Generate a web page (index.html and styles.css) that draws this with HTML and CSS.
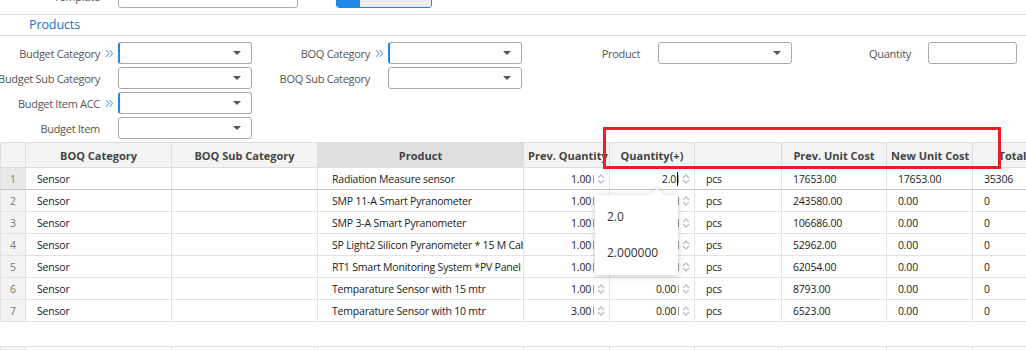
FILE: index.html
```html
<!DOCTYPE html>
<html lang="en">
<head>
    <meta charset="UTF-8">
    <title>Products</title>
    <link rel="stylesheet" href="styles.css">
</head>
<body>
    <!-- Template bar (scrolled, only bottom edge visible) -->
    <div class="top-strip">
        <div class="top-inner">
            <span class="tpl-label">Template</span>
            <span class="req-mark"></span>
            <div class="tpl-input"></div>
            <div class="load-btn"><span class="load-edge"></span><span class="load-text">Load</span></div>
        </div>
    </div>

    <div class="section-title">Products</div>

    <!-- Filters -->
    <div class="filters">
        <div class="fcol col1">
            <div class="field">
                <span class="flabel">Budget Category</span>
                <span class="req-mark"><svg viewBox="0 0 9 9"><path d="M1 1l3 3.5-3 3.5M4.5 1l3 3.5-3 3.5"/></svg></span>
                <div class="select required"><span class="caret"></span></div>
            </div>
            <div class="field">
                <span class="flabel">Budget Sub Category</span>
                <span class="req-mark"></span>
                <div class="select"><span class="caret"></span></div>
            </div>
            <div class="field">
                <span class="flabel">Budget Item ACC</span>
                <span class="req-mark"><svg viewBox="0 0 9 9"><path d="M1 1l3 3.5-3 3.5M4.5 1l3 3.5-3 3.5"/></svg></span>
                <div class="select required"><span class="caret"></span></div>
            </div>
            <div class="field">
                <span class="flabel">Budget Item</span>
                <span class="req-mark"></span>
                <div class="select"><span class="caret"></span></div>
            </div>
        </div>
        <div class="fcol col2">
            <div class="field">
                <span class="flabel">BOQ Category</span>
                <span class="req-mark"><svg viewBox="0 0 9 9"><path d="M1 1l3 3.5-3 3.5M4.5 1l3 3.5-3 3.5"/></svg></span>
                <div class="select required"><span class="caret"></span></div>
            </div>
            <div class="field">
                <span class="flabel">BOQ Sub Category</span>
                <span class="req-mark"></span>
                <div class="select"><span class="caret"></span></div>
            </div>
        </div>
        <div class="fcol col3">
            <div class="field">
                <span class="flabel">Product</span>
                <span class="req-mark"></span>
                <div class="select"><span class="caret"></span></div>
            </div>
        </div>
        <div class="fcol col4">
            <div class="field">
                <span class="flabel">Quantity</span>
                <span class="req-mark"></span>
                <div class="text-input"></div>
            </div>
        </div>
    </div>

    <!-- Grid -->
    <div class="grid-wrap">
        <table class="grid">
            <colgroup>
                <col style="width:25px"><col style="width:146px"><col style="width:146px"><col style="width:206px"><col style="width:86px"><col style="width:85px"><col style="width:87px"><col style="width:105px"><col style="width:86px"><col style="width:80px">
            </colgroup>
            <thead>
                <tr>
                    <th class="rownum"></th>
                    <th>BOQ Category</th>
                    <th>BOQ Sub Category</th>
                    <th class="sorted">Product</th>
                    <th>Prev. Quantity</th>
                    <th>Quantity(+)</th>
                    <th></th>
                    <th>Prev. Unit Cost</th>
                    <th>New Unit Cost</th>
                    <th>Total</th>
                </tr>
            </thead>
            <tbody>
                <tr class="current">
                    <td class="rownum">1</td>
                    <td>Sensor</td>
                    <td></td>
                    <td class="prod">Radiation Measure sensor</td>
                    <td class="spin"><div class="spin-box"><span class="num">1.00</span><span class="sep"></span><svg class="arrows" viewBox="0 0 10 12"><path d="M2 5l3-3 3 3M2 7l3 3 3-3"/></svg></div></td>
                    <td class="spin"><div class="spin-box"><span class="num editing">2.0<span class="text-cursor"></span></span><span class="sep"></span><svg class="arrows" viewBox="0 0 10 12"><path d="M2 5l3-3 3 3M2 7l3 3 3-3"/></svg></div></td>
                    <td>pcs</td>
                    <td>17653.00</td>
                    <td>17653.00</td>
                    <td>35306</td>
                </tr>
                <tr>
                    <td class="rownum">2</td>
                    <td>Sensor</td>
                    <td></td>
                    <td class="prod">SMP 11-A Smart Pyranometer</td>
                    <td class="spin"><div class="spin-box"><span class="num">1.00</span><span class="sep"></span><svg class="arrows" viewBox="0 0 10 12"><path d="M2 5l3-3 3 3M2 7l3 3 3-3"/></svg></div></td>
                    <td class="spin"><div class="spin-box"><span class="num">0.00</span><span class="sep"></span><svg class="arrows" viewBox="0 0 10 12"><path d="M2 5l3-3 3 3M2 7l3 3 3-3"/></svg></div></td>
                    <td>pcs</td>
                    <td>243580.00</td>
                    <td>0.00</td>
                    <td>0</td>
                </tr>
                <tr>
                    <td class="rownum">3</td>
                    <td>Sensor</td>
                    <td></td>
                    <td class="prod">SMP 3-A Smart Pyranometer</td>
                    <td class="spin"><div class="spin-box"><span class="num">1.00</span><span class="sep"></span><svg class="arrows" viewBox="0 0 10 12"><path d="M2 5l3-3 3 3M2 7l3 3 3-3"/></svg></div></td>
                    <td class="spin"><div class="spin-box"><span class="num">0.00</span><span class="sep"></span><svg class="arrows" viewBox="0 0 10 12"><path d="M2 5l3-3 3 3M2 7l3 3 3-3"/></svg></div></td>
                    <td>pcs</td>
                    <td>106686.00</td>
                    <td>0.00</td>
                    <td>0</td>
                </tr>
                <tr>
                    <td class="rownum">4</td>
                    <td>Sensor</td>
                    <td></td>
                    <td class="prod">SP Light2 Silicon Pyranometer * 15 M Cable</td>
                    <td class="spin"><div class="spin-box"><span class="num">1.00</span><span class="sep"></span><svg class="arrows" viewBox="0 0 10 12"><path d="M2 5l3-3 3 3M2 7l3 3 3-3"/></svg></div></td>
                    <td class="spin"><div class="spin-box"><span class="num">0.00</span><span class="sep"></span><svg class="arrows" viewBox="0 0 10 12"><path d="M2 5l3-3 3 3M2 7l3 3 3-3"/></svg></div></td>
                    <td>pcs</td>
                    <td>52962.00</td>
                    <td>0.00</td>
                    <td>0</td>
                </tr>
                <tr>
                    <td class="rownum">5</td>
                    <td>Sensor</td>
                    <td></td>
                    <td class="prod">RT1 Smart Monitoring System *PV Panel</td>
                    <td class="spin"><div class="spin-box"><span class="num">1.00</span><span class="sep"></span><svg class="arrows" viewBox="0 0 10 12"><path d="M2 5l3-3 3 3M2 7l3 3 3-3"/></svg></div></td>
                    <td class="spin"><div class="spin-box"><span class="num">0.00</span><span class="sep"></span><svg class="arrows" viewBox="0 0 10 12"><path d="M2 5l3-3 3 3M2 7l3 3 3-3"/></svg></div></td>
                    <td>pcs</td>
                    <td>62054.00</td>
                    <td>0.00</td>
                    <td>0</td>
                </tr>
                <tr>
                    <td class="rownum">6</td>
                    <td>Sensor</td>
                    <td></td>
                    <td class="prod">Temparature Sensor with 15 mtr</td>
                    <td class="spin"><div class="spin-box"><span class="num">1.00</span><span class="sep"></span><svg class="arrows" viewBox="0 0 10 12"><path d="M2 5l3-3 3 3M2 7l3 3 3-3"/></svg></div></td>
                    <td class="spin"><div class="spin-box"><span class="num">0.00</span><span class="sep"></span><svg class="arrows" viewBox="0 0 10 12"><path d="M2 5l3-3 3 3M2 7l3 3 3-3"/></svg></div></td>
                    <td>pcs</td>
                    <td>8793.00</td>
                    <td>0.00</td>
                    <td>0</td>
                </tr>
                <tr>
                    <td class="rownum">7</td>
                    <td>Sensor</td>
                    <td></td>
                    <td class="prod">Temparature Sensor with 10 mtr</td>
                    <td class="spin"><div class="spin-box"><span class="num">3.00</span><span class="sep"></span><svg class="arrows" viewBox="0 0 10 12"><path d="M2 5l3-3 3 3M2 7l3 3 3-3"/></svg></div></td>
                    <td class="spin"><div class="spin-box"><span class="num">0.00</span><span class="sep"></span><svg class="arrows" viewBox="0 0 10 12"><path d="M2 5l3-3 3 3M2 7l3 3 3-3"/></svg></div></td>
                    <td>pcs</td>
                    <td>6523.00</td>
                    <td>0.00</td>
                    <td>0</td>
                </tr>
            </tbody>
        </table>

        <table class="grid grid-foot">
            <colgroup>
                <col style="width:25px"><col style="width:146px"><col style="width:146px"><col style="width:206px"><col style="width:86px"><col style="width:85px"><col style="width:87px"><col style="width:105px"><col style="width:86px"><col style="width:80px">
            </colgroup>
            <tr>
                <td class="rownum"></td><td></td><td></td><td></td><td></td><td></td><td></td><td></td><td></td><td></td>
            </tr>
        </table>

        <!-- Autocomplete popup for the edited quantity -->
        <div class="qty-popup">
            <div class="popup-item">2.0</div>
            <div class="popup-item">2.000000</div>
        </div>

        <!-- Annotation box -->
        <div class="highlight"></div>
    </div>
</body>
</html>
```

FILE: styles.css
```css
* {
    margin: 0;
    padding: 0;
    box-sizing: border-box;
}

body {
    font-family: "Open Sans", "Noto Sans", sans-serif;
    font-size: 10.5px;
    letter-spacing: -0.2px;
    color: #222;
    background: #fff;
    overflow: hidden;
    width: 1026px;
    height: 350px;
}

/* Template bar */
.top-strip {
    height: 15px;
    border-bottom: 1px solid #dcdce8;
    overflow: hidden;
}

.top-inner {
    display: flex;
    align-items: flex-end;
    height: 8px;
}

.tpl-label {
    flex: 0 0 100px;
    text-align: right;
    line-height: 22px;
    height: 22px;
    color: #555;
    font-size: 11px;
}

.tpl-input {
    flex: 0 0 180px;
    height: 22px;
    border: 1px solid #aaa;
    border-radius: 3px;
}

.load-btn {
    display: flex;
    margin-left: 38px;
    width: 96px;
    height: 24px;
    border: 1px solid #1e88e5;
    border-radius: 3px;
    overflow: hidden;
}

.load-edge {
    width: 23px;
    background: #1e88e5;
}

.load-text {
    flex: 1;
    background: #ececec;
    text-align: center;
    line-height: 22px;
    color: #555;
}

.section-title {
    height: 21px;
    padding-left: 29px;
    line-height: 20px;
    font-size: 12.5px;
    letter-spacing: -0.1px;
    color: #1a6fcf;
    border-bottom: 1px solid #dcdce8;
}

/* Filters */
.filters {
    display: flex;
    align-items: flex-start;
    padding-top: 6px;
}

.fcol {
    display: flex;
    flex-direction: column;
    gap: 3px;
}

.field {
    display: flex;
    align-items: center;
    height: 22px;
}

.flabel {
    flex: 0 0 118px;
    min-width: 0;
    display: flex;
    justify-content: flex-end;
    white-space: nowrap;
    font-size: 11px;
    letter-spacing: -0.3px;
    color: #555;
}

.col1 .flabel {
    flex-basis: 100px;
}

.col4 .flabel {
    flex-basis: 119px;
}

.req-mark {
    flex: 0 0 18px;
    display: flex;
    justify-content: center;
    align-items: center;
}

.col4 .req-mark {
    flex-basis: 17px;
}

.req-mark svg {
    width: 9px;
    height: 9px;
    fill: none;
    stroke: #6f9ce8;
    stroke-width: 1.1;
}

.select {
    flex: 0 0 134px;
    height: 22px;
    border: 1px solid #a9a9a9;
    border-radius: 3px;
    display: flex;
    justify-content: flex-end;
    align-items: center;
    padding-right: 10px;
}

.select.required {
    border-left: 2px solid #1e88e5;
}

.caret {
    width: 0;
    height: 0;
    border-left: 4.5px solid transparent;
    border-right: 4.5px solid transparent;
    border-top: 4.5px solid #555;
}

.text-input {
    flex: 0 0 89px;
    height: 22px;
    border: 1px solid #a9a9a9;
    border-radius: 3px;
}

/* Grid */
.grid-wrap {
    position: relative;
    margin-top: 3px;
    width: 1026px;
}

.grid {
    table-layout: fixed;
    border-collapse: collapse;
    width: 1052px;
}

.grid th,
.grid td {
    border: 1px solid #e2e2e2;
    white-space: nowrap;
    overflow: hidden;
    padding: 0 11px;
    text-align: left;
}

.grid th {
    height: 25px;
    background: #f3f3f3;
    border-color: #dcdcdc;
    color: #444;
    font-size: 11px;
    letter-spacing: 0;
    font-weight: 700;
    text-align: center;
    padding: 0 4px;
}

.grid th.sorted {
    background: #e0e0e0;
}

.grid td {
    height: 22px;
    line-height: 20px;
}

.grid td.rownum,
.grid th.rownum {
    background: #f3f3f3;
    color: #777;
    text-align: center;
    padding: 0;
}

.grid tr.current td.rownum {
    background: #e9e9e9;
}

.grid tr.current td {
    border-bottom-color: #c2c2c2;
}

.grid td.prod {
    padding-left: 14px;
}

.grid td.spin {
    padding: 0 3px 0 0;
}

.spin-box {
    display: flex;
    align-items: center;
}

.spin-box .num {
    flex: 1;
    text-align: right;
    position: relative;
}

.text-cursor {
    position: absolute;
    right: -2px;
    top: 3px;
    width: 1px;
    height: 14px;
    background: #000;
}

.sep {
    width: 1px;
    height: 8px;
    background: #999;
    margin: 0 2px 0 2px;
}

.arrows {
    width: 10px;
    height: 12px;
    fill: none;
    stroke: #b6c1d0;
    stroke-width: 1.4;
}

.grid-foot {
    margin-top: 24px;
}

.grid-foot td {
    height: 10px;
}

/* Autocomplete popup */
.qty-popup {
    position: absolute;
    left: 595px;
    top: 53px;
    width: 83px;
    height: 80px;
    background: #fff;
    border-radius: 4px;
    box-shadow: 0 1px 6px rgba(0, 0, 0, 0.22);
    padding-top: 8px;
    z-index: 5;
}

.qty-popup::before {
    content: "";
    position: absolute;
    top: -5px;
    left: 57px;
    width: 10px;
    height: 10px;
    background: #fff;
    transform: rotate(45deg);
    box-shadow: -2px -2px 3px rgba(0, 0, 0, 0.08);
}

.popup-item {
    position: relative;
    padding-left: 12px;
    height: 36px;
    line-height: 28px;
    font-size: 12px;
    letter-spacing: 0;
    color: #333;
}

/* Red annotation */
.highlight {
    position: absolute;
    left: 603px;
    top: -15px;
    width: 398px;
    height: 42px;
    border: 3px solid #ee1c25;
    z-index: 6;
}
```
